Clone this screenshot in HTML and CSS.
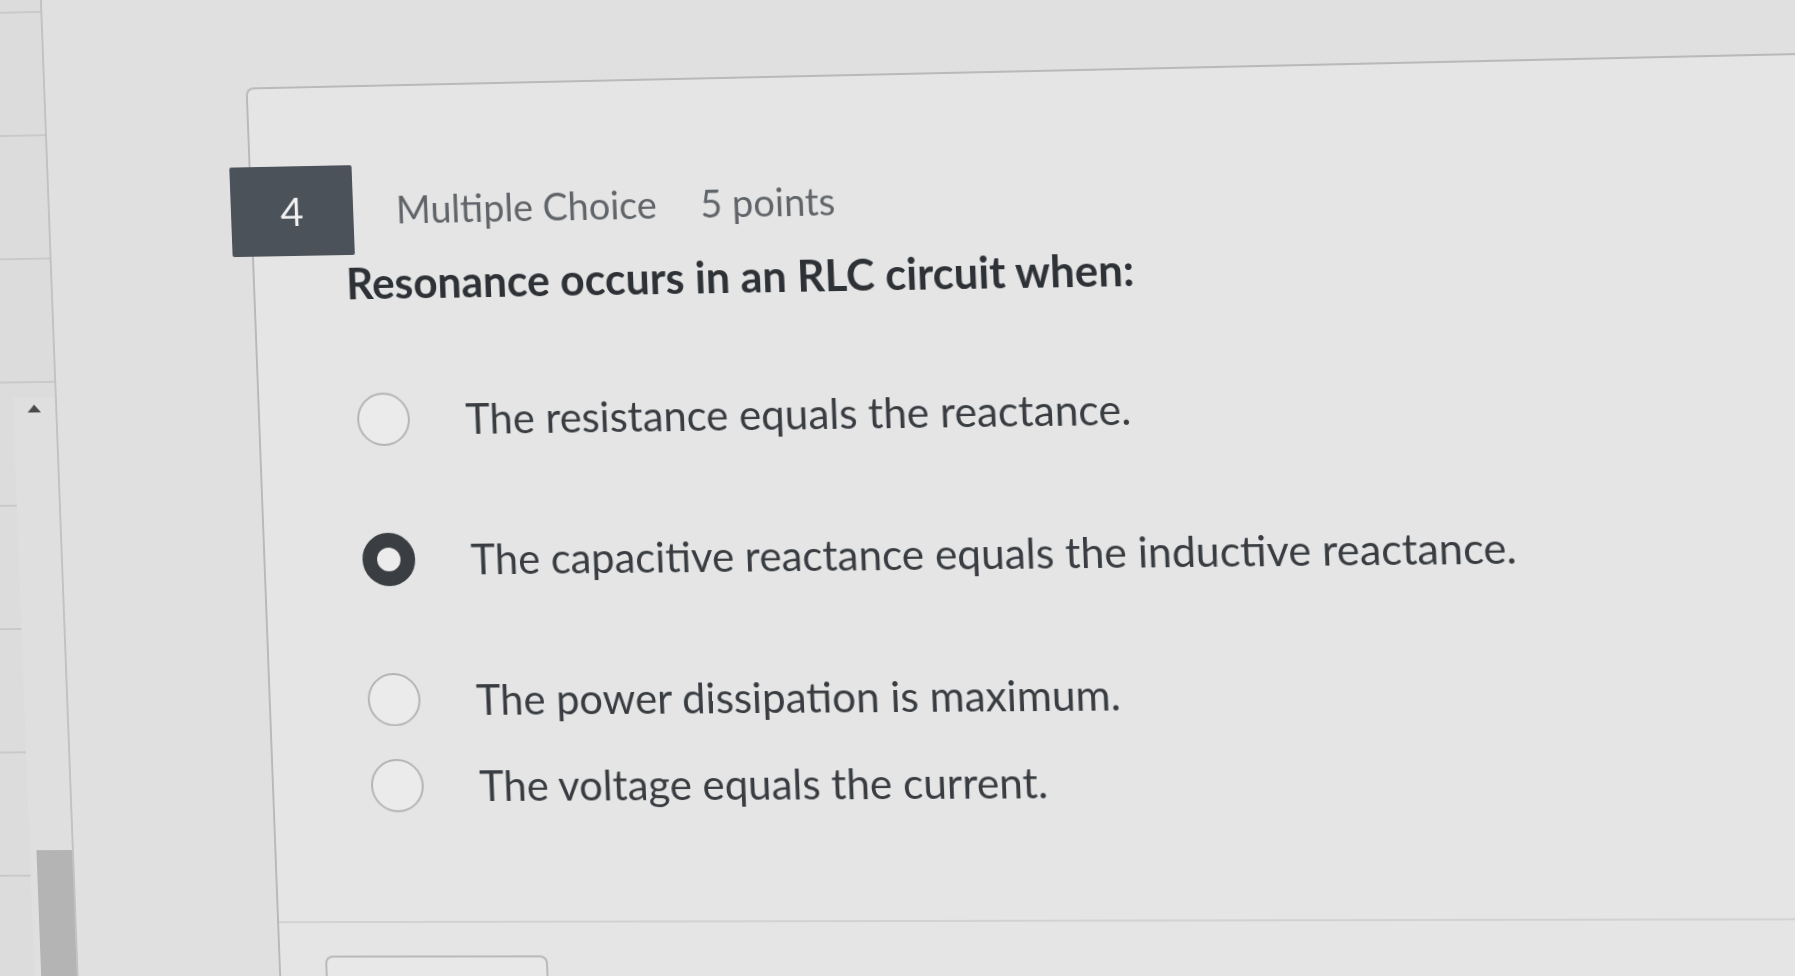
FILE: index.html
```html
<!DOCTYPE html>
<html lang="en">
<head>
<meta charset="utf-8">
<title>Quiz question 4</title>
<link rel="stylesheet" href="styles.css">
</head>
<body>
<div class="screen">
  <aside class="sidebar">
    <ul class="nav-list">
      <li class="nav-item nav-item--first"></li>
      <li class="nav-item"></li>
      <li class="nav-item"></li>
      <li class="nav-item"></li>
      <li class="nav-item"></li>
      <li class="nav-item"></li>
      <li class="nav-item"></li>
      <li class="nav-item"></li>
    </ul>
    <div class="scrollbar">
      <span class="scroll-arrow"></span>
      <span class="scroll-thumb"></span>
    </div>
  </aside>
  <main class="main">
    <section class="question-card">
      <header class="question-header">
        <div class="question-number">4</div>
        <span class="question-type">Multiple Choice</span>
        <span class="question-points">5 points</span>
      </header>
      <h2 class="question-text">Resonance occurs in an RLC circuit when:</h2>
      <div class="answers">
        <label class="answer">
          <span class="radio"></span>
          <span class="answer-text">The resistance equals the reactance.</span>
        </label>
        <label class="answer">
          <span class="radio radio--checked"></span>
          <span class="answer-text">The capacitive reactance equals the inductive reactance.</span>
        </label>
        <label class="answer">
          <span class="radio"></span>
          <span class="answer-text">The power dissipation is maximum.</span>
        </label>
        <label class="answer answer--compact">
          <span class="radio"></span>
          <span class="answer-text">The voltage equals the current.</span>
        </label>
      </div>
      <footer class="card-footer">
        <button class="footer-button" type="button"></button>
      </footer>
    </section>
  </main>
</div>
</body>
</html>
```

FILE: styles.css
```css
html,
body {
  margin: 0;
  padding: 0;
  width: 1795px;
  height: 976px;
  overflow: hidden;
  background: #e0e0e0;
}

body {
  font-family: Lato, "Noto Sans", "Liberation Sans", sans-serif;
}

/* the whole photographed screen, tilted like the camera saw it */
.screen {
  display: flex;
  width: 1875px;
  height: 1017px;
  margin: -40px 0 0 -40px;
  overflow: hidden;
  background: #e0e0e0;
  transform-origin: 940px 1040px;
  transform: perspective(2000px) rotateY(-2.75deg) skewX(2.2deg);
}

/* left navigation column */
.sidebar {
  position: relative;
  flex: 0 0 100px;
  background: #dcdcdc;
  border-right: 2px solid #c2c2c2;
}

.nav-list {
  list-style: none;
  margin: 0;
  padding: 0;
}

.nav-item {
  height: 124px;
  border-bottom: 2px solid #c9c9c9;
}

.nav-item--first {
  height: 30px;
}

.scrollbar {
  position: absolute;
  top: 425px;
  right: 0;
  bottom: 0;
  width: 44px;
  display: flex;
  flex-direction: column;
  background: #dfdfdf;
}

.scroll-arrow {
  align-self: center;
  width: 0;
  height: 0;
  margin-top: 7px;
  border-left: 7px solid transparent;
  border-right: 7px solid transparent;
  border-bottom: 8px solid #4a4a4a;
}

.scroll-thumb {
  margin-top: auto;
  margin-left: 7px;
  height: 130px;
  background: #b4b4b4;
}

/* main content */
.main {
  flex: 1;
  display: flex;
  padding: 113px 0 0 208px;
}

.question-card {
  flex: 1;
  display: flex;
  flex-direction: column;
  background: #e5e5e5;
  border-top: 2px solid #b9b9b9;
  border-left: 2px solid #b9b9b9;
  border-top-left-radius: 8px;
}

.question-header {
  display: flex;
  align-items: center;
  gap: 44px;
  margin-top: 79px;
}

.question-number {
  flex: 0 0 126px;
  height: 91px;
  margin-left: -22px;
  display: flex;
  align-items: center;
  justify-content: center;
  background: #4b5259;
  color: #f2f2f2;
  font-size: 41px;
  border-radius: 2px;
}

.question-type,
.question-points {
  font-size: 38.3px;
  color: #616569;
  line-height: 1.2;
}

.question-text {
  margin: 2px 0 0;
  padding-left: 94px;
  font-size: 43.4px;
  font-weight: 700;
  line-height: 1.2;
  color: #2e3236;
}

.answers {
  display: flex;
  flex-direction: column;
  margin-top: 86px;
  padding-left: 100px;
}

.answer {
  display: flex;
  align-items: center;
  gap: 57px;
  height: 54px;
}

.answer + .answer {
  margin-top: 88px;
}

.answer + .answer--compact {
  margin-top: 33px;
}

.radio {
  flex: 0 0 54px;
  height: 54px;
  box-sizing: border-box;
  border-radius: 50%;
  border: 2px solid #b4b4b4;
  background: #ebebeb;
}

.radio--checked {
  border: 15px solid #3a3e43;
  background: #ececec;
}

.answer-text {
  font-size: 42.3px;
  line-height: 1.2;
  color: #393d41;
  white-space: nowrap;
}

.card-footer {
  flex: 1;
  margin-top: 110px;
  padding: 33px 0 0 46px;
  border-top: 2px solid #d2d2d2;
}

.footer-button {
  display: block;
  width: 228px;
  height: 40px;
  padding: 0;
  border: 2px solid #b9b9b9;
  border-bottom: 0;
  border-radius: 8px 8px 0 0;
  background: #e8e8e8;
}
```
